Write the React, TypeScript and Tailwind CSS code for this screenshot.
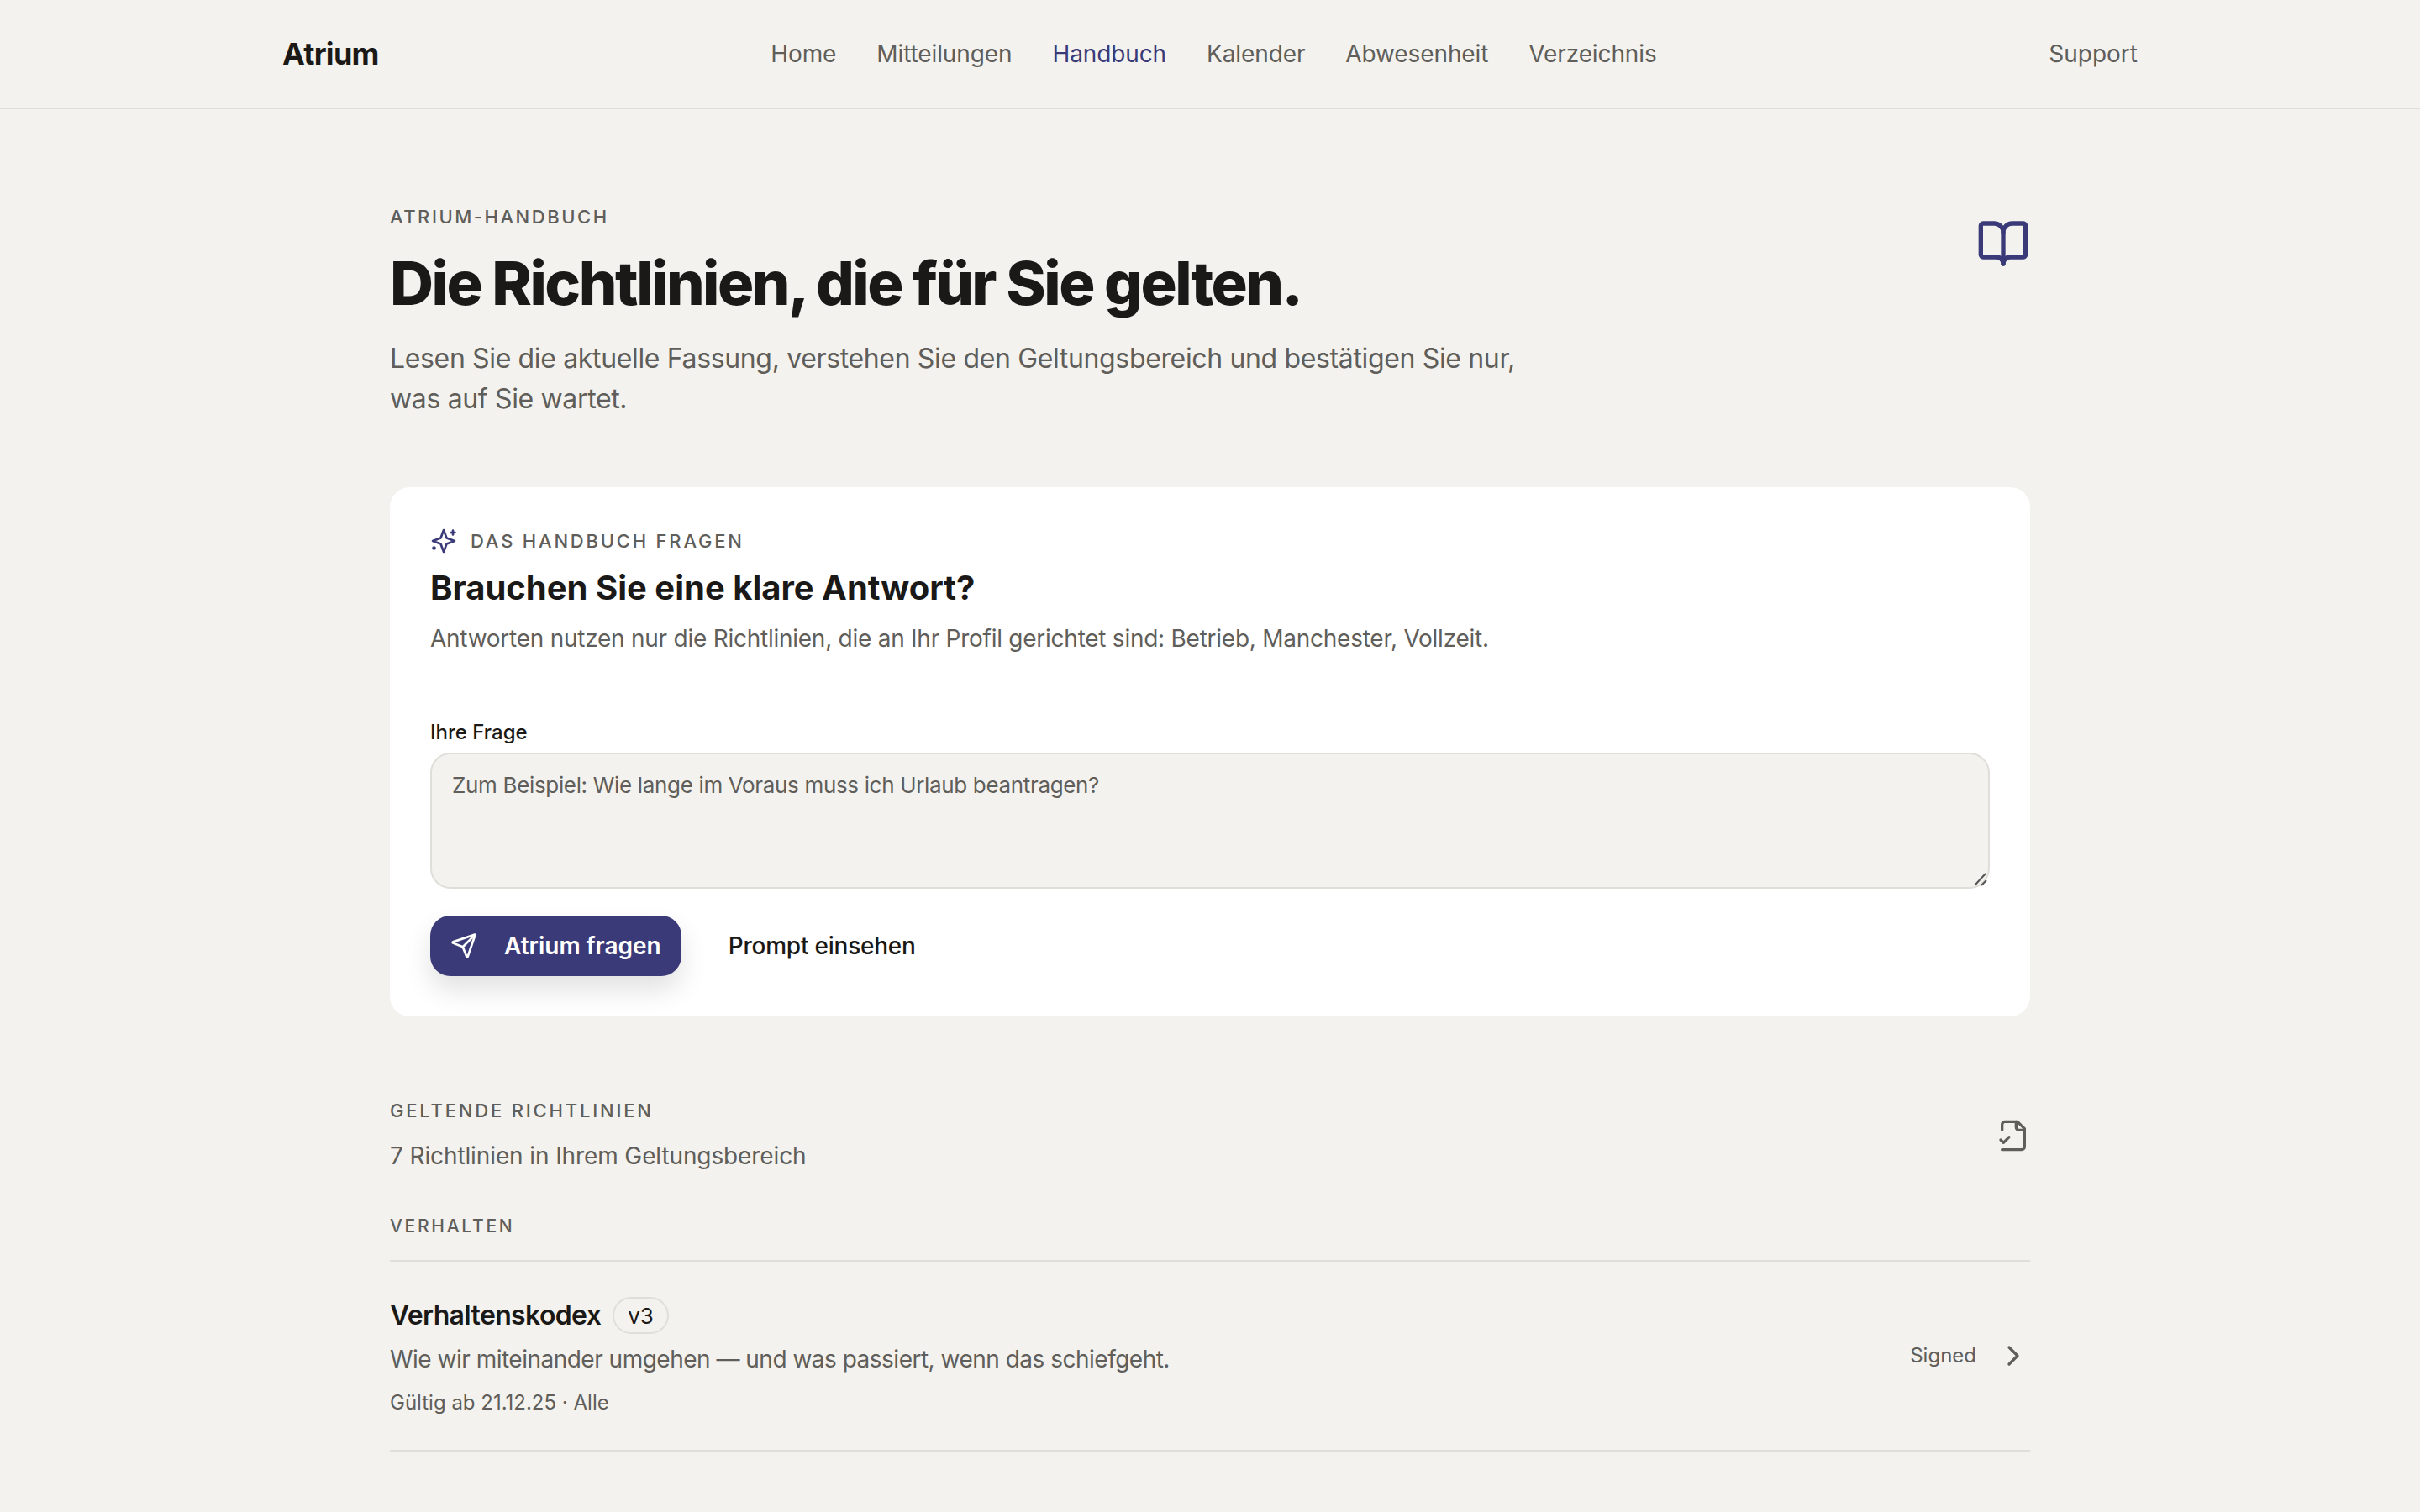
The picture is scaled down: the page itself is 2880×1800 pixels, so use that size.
import { BookOpen, ChevronRight, Send } from "lucide-react";

const navItems = ["Home", "Mitteilungen", "Handbuch", "Kalender", "Abwesenheit", "Verzeichnis"];

const FileCheckIcon = () => (
  <svg
    width="40"
    height="40"
    viewBox="0 0 24 24"
    fill="none"
    stroke="currentColor"
    strokeWidth="2"
    strokeLinecap="round"
    strokeLinejoin="round"
  >
    <path d="M4 22h14a2 2 0 0 0 2-2V7l-5-5H6a2 2 0 0 0-2 2v4" />
    <path d="M14 2v4a2 2 0 0 0 2 2h4" />
    <path d="m3 15 2 2 4-4" />
  </svg>
);

const SparkIcon = () => (
  <svg
    className="text-[#3b3a78]"
    width="32"
    height="32"
    viewBox="0 0 32 32"
    fill="none"
    stroke="currentColor"
    strokeWidth="2.6"
    strokeLinecap="round"
    strokeLinejoin="round"
  >
    <path d="M16 3l3.5 9.5L29 16l-9.500 3.500L16 29l-3.500-9.500L3 16l9.500-3.500z" />
    <path d="M27 3.500v5M24.500 6h5" />
    <circle cx="4.500" cy="24.500" r="1" />
  </svg>
);

export default function App() {
  return (
    <div className="min-h-screen bg-[#f3f2ee] text-[#1a1917] font-['Inter',sans-serif]">
      <header className="h-[130px] border-b-2 border-[#dfded9]">
        <div className="w-[2208px] h-full mx-auto flex items-center justify-between">
          <span className="text-[36px] font-bold tracking-[-0.02em]">Atrium</span>
          <nav className="flex gap-12">
            {navItems.map((item) => (
              <a
                key={item}
                className={`text-[28px] tracking-[-0.004em] ${item === "Handbuch" ? "text-[#3b3a78]" : "text-[#5f5e5a]"}`}
              >
                {item}
              </a>
            ))}
          </nav>
          <a className="text-[28px] text-[#5f5e5a]">Support</a>
        </div>
      </header>

      <main className="w-[1952px] mx-auto pt-[112px]">
        <section className="flex justify-between items-start">
          <div>
            <p className="text-[22px] leading-8 font-medium tracking-[0.115em] text-[#5f5e5a]">ATRIUM-HANDBUCH</p>
            <h1 className="mt-[19px] mb-[22px] text-[72px] leading-[88px] font-extrabold tracking-[-0.035em]">
              Die Richtlinien, die für Sie gelten.
            </h1>
            <p className="w-[1400px] text-[32px] leading-[48px] tracking-[-0.011em] text-[#5f5e5a]">
              Lesen Sie die aktuelle Fassung, verstehen Sie den Geltungsbereich und bestätigen Sie nur, was auf Sie wartet.
            </p>
          </div>
          <BookOpen size={64} className="mt-4 text-[#3b3a78]" />
        </section>

        <section className="mt-[81px] bg-white rounded-3xl p-12">
          <div className="flex items-center gap-4">
            <SparkIcon />
            <span className="text-[22px] leading-8 font-medium tracking-[0.127em] text-[#5f5e5a]">
              DAS HANDBUCH FRAGEN
            </span>
          </div>
          <h2 className="mt-3 text-[40px] leading-[56px] font-bold">Brauchen Sie eine klare Antwort?</h2>
          <p className="mt-[10px] text-[28px] leading-[44px] tracking-[-0.009em] text-[#5f5e5a]">
            Antworten nutzen nur die Richtlinien, die an Ihr Profil gerichtet sind: Betrieb, Manchester, Vollzeit.
          </p>
          <label className="block mt-[74px] text-[24px] leading-8 font-medium">Ihre Frage</label>
          <div className="relative mt-2">
            <textarea
              className="block w-full h-[162px] px-6 py-6 bg-[#f3f2ee] border-2 border-[#dfded9] rounded-3xl resize-none text-[26px] leading-[26px] tracking-[-0.013em] placeholder:text-[#5f5e5a]"
              placeholder="Zum Beispiel: Wie lange im Voraus muss ich Urlaub beantragen?"
            />
            <svg className="absolute right-[3px] bottom-[3px]" width="20" height="20" viewBox="0 0 20 20" stroke="#555" strokeWidth="2">
              <path d="M18 5 5 19M19 13l-6 6" />
            </svg>
          </div>
          <div className="mt-8 flex items-center gap-[56px]">
            <button className="h-[72px] px-6 flex items-center gap-8 rounded-3xl bg-[#3b3a78] text-white text-[28px] font-semibold shadow-[0_16px_32px_rgba(0,0,0,0.12)]">
              <Send size={32} />
              Atrium fragen
            </button>
            <button className="text-[28px] font-medium tracking-[-0.008em]">Prompt einsehen</button>
          </div>
        </section>

        <section className="mt-[96px]">
          <div className="flex justify-between items-center">
            <div>
              <p className="text-[22px] leading-8 font-medium tracking-[0.128em] text-[#5f5e5a]">GELTENDE RICHTLINIEN</p>
              <p className="mt-4 text-[28px] leading-[44px] tracking-[-0.004em] text-[#5f5e5a]">
                7 Richtlinien in Ihrem Geltungsbereich
              </p>
            </div>
            <div className="text-[#5f5e5a]">
              <FileCheckIcon />
            </div>
          </div>
          <p className="mt-[46px] pb-6 border-b-2 border-[#dfded9] text-[21px] leading-8 font-medium tracking-[0.13em] text-[#5f5e5a]">
            VERHALTEN
          </p>
          <div className="flex items-center justify-between h-[226px] border-b-2 border-[#dfded9]">
            <div className="pt-1">
              <div className="flex items-center gap-[14px]">
                <span className="text-[32px] leading-[44px] font-semibold tracking-[-0.02em]">Verhaltenskodex</span>
                <span className="h-11 px-4 flex items-center rounded-full border-2 border-[#dfded9] text-[26px]">v3</span>
              </div>
              <p className="mt-2 text-[28px] leading-[44px] tracking-[-0.018em] text-[#5f5e5a]">
                Wie wir miteinander umgehen — und was passiert, wenn das schiefgeht.
              </p>
              <p className="mt-[12px] text-[24px] leading-[36px] text-[#5f5e5a]">Gültig ab 21.12.25 · Alle</p>
            </div>
            <div className="flex items-center gap-6 text-[#5f5e5a]">
              <span className="text-[24px]">Signed</span>
              <ChevronRight size={40} />
            </div>
          </div>
        </section>
      </main>
    </div>
  );
}
